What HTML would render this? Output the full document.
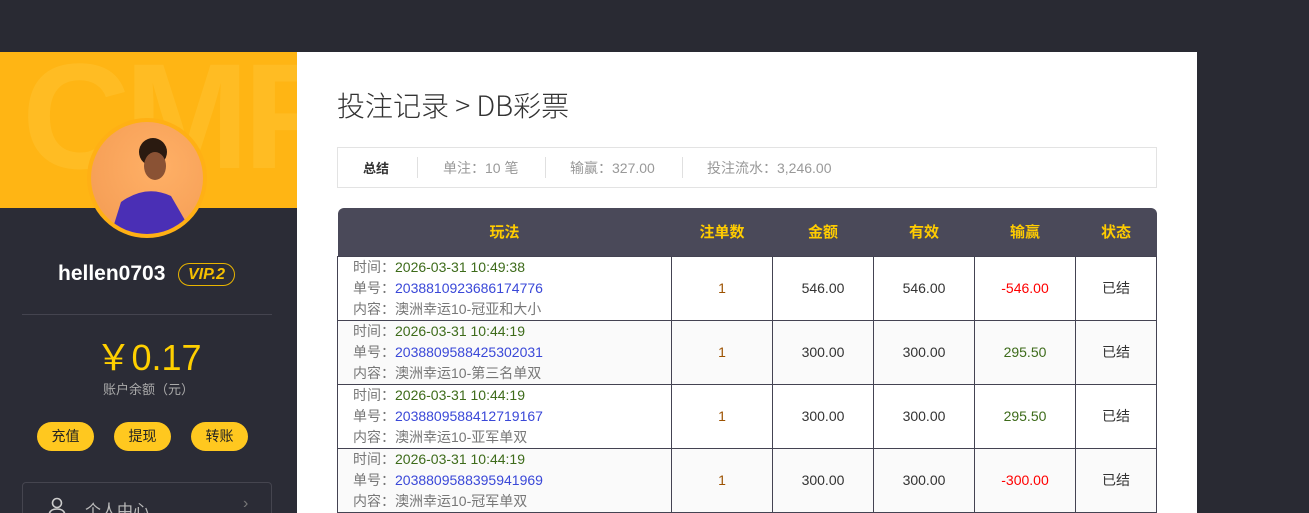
<!DOCTYPE html><html><head><meta charset="utf-8"><style>
*{margin:0;padding:0;box-sizing:border-box}
html,body{width:1309px;height:513px;overflow:hidden}
body{background:#292a33;font-family:"Liberation Sans","Noto Sans CJK SC",sans-serif;position:relative}
.side{position:absolute;left:0;top:52px;width:297px;height:461px;background:#2b2c36;overflow:hidden}
.hdr{position:absolute;left:0;top:0;width:297px;height:156px;background:#ffb514;overflow:hidden}
.hdr .cmf{position:absolute;left:22px;top:-22px;font-size:150px;font-weight:bold;color:rgba(255,210,80,.25);letter-spacing:-6px}
.av{position:absolute;left:87px;top:66px;width:120px;height:120px;border-radius:50%;background:#ffb014;padding:4px}
.av div{width:112px;height:112px;border-radius:50%;background:radial-gradient(circle at 60% 40%,#ffb066,#f39a52);overflow:hidden;position:relative}
.main{position:absolute;left:297px;top:52px;width:900px;height:461px;background:#fff;overflow:hidden}
h1{position:absolute;left:40px;top:33px;font-size:28px;color:#333;font-family:"Noto Sans CJK SC","Liberation Sans",sans-serif;font-weight:300;white-space:pre}
.sum{position:absolute;left:40px;top:95px;width:820px;height:41px;border:1px solid #e3e3e3;font-size:14px;color:#999}
.sum span{position:absolute;top:10px}
.sum i{position:absolute;top:9px;width:1px;height:21px;background:#e0e0e0}
table{position:absolute;left:40px;top:156px;width:820px;border-collapse:collapse;font-size:14px;color:#333}
th{background:#4a4959;color:#ffcc00;height:48px;font-size:15px;font-weight:bold}
td{border:1px solid #444352;height:64px;text-align:center}
td.l{text-align:left;padding-left:15px;line-height:21px;color:#777}
tr.a td{background:#fafafa}
.g{color:#3d6b1a}.b{color:#3a48d8}.r{color:#f00}.o{color:#9c5200}
.btn{position:absolute;top:370px;width:57px;height:29px;border-radius:15px;background:#ffc81f;font-size:14px;text-align:center;line-height:29px;color:#222}
</style></head><body>
<div class="side">
<div class="hdr"><div class="cmf">CMF</div></div>
<div class="av"><div><svg width="112" height="112"><circle cx="62" cy="30" r="14" fill="#2a1a10"/><ellipse cx="64" cy="44" rx="11" ry="14" fill="#8a5234"/><path d="M20 112 L30 80 Q55 62 80 74 L95 100 L90 112Z" fill="#4a2fb5"/></svg></div></div>
<div style="position:absolute;left:58px;top:210px;font-size:21px;font-weight:bold;color:#fff">hellen0703</div>
<div style="position:absolute;left:178px;top:211px;width:57px;height:23px;border:1px solid #e8b400;border-radius:12px;color:#f5c000;font-style:italic;font-weight:bold;font-size:16px;text-align:center;line-height:21px">VIP.2</div>
<div style="position:absolute;left:22px;top:262px;width:250px;height:1px;background:#44444f"></div>
<div style="position:absolute;left:0;width:297px;top:277px;text-align:center;font-size:36px;color:#ffd000">￥0.17</div>
<div style="position:absolute;left:0;width:297px;top:327px;text-align:center;font-size:13px;color:#aaa">账户余额（元）</div>
<div class="btn" style="left:37px">充值</div><div class="btn" style="left:114px">提现</div><div class="btn" style="left:191px">转账</div>
<div style="position:absolute;left:22px;top:430px;width:250px;height:60px;border:1px solid #45454f;border-radius:4px"><svg style="position:absolute;left:24px;top:14px" width="20" height="20"><circle cx="10" cy="6" r="4.5" fill="none" stroke="#ccc" stroke-width="1.6"/><path d="M2 19 Q2 12 10 12 Q18 12 18 19Z" fill="none" stroke="#ccc" stroke-width="1.6"/></svg><span style="position:absolute;left:62px;top:14px;font-size:16px;color:#bbb">个人中心</span><span style="position:absolute;left:220px;top:12px;color:#777;font-size:16px">›</span></div>
</div>
<div class="main">
<h1>投注记录 &gt; DB彩票</h1>
<div class="sum"><span style="left:25px;color:#333;font-weight:bold;font-size:13px">总结</span><i style="left:79px"></i><span style="left:105px">单注：10 笔</span><i style="left:207px"></i><span style="left:232px">输赢：327.00</span><i style="left:344px"></i><span style="left:369px">投注流水：3,246.00</span></div>
<table>
<tr><th style="width:334px;border-top-left-radius:6px">玩法</th><th style="width:101px">注单数</th><th style="width:101px">金额</th><th style="width:101px">有效</th><th style="width:101px">输赢</th><th style="border-top-right-radius:6px">状态</th></tr>
<tr><td class="l">时间：<span class="g">2026-03-31 10:49:38</span><br>单号：<span class="b">2038810923686174776</span><br>内容：澳洲幸运10-冠亚和大小</td><td class="o">1</td><td>546.00</td><td>546.00</td><td class="r">-546.00</td><td>已结</td></tr>
<tr class="a"><td class="l">时间：<span class="g">2026-03-31 10:44:19</span><br>单号：<span class="b">2038809588425302031</span><br>内容：澳洲幸运10-第三名单双</td><td class="o">1</td><td>300.00</td><td>300.00</td><td class="g">295.50</td><td>已结</td></tr>
<tr><td class="l">时间：<span class="g">2026-03-31 10:44:19</span><br>单号：<span class="b">2038809588412719167</span><br>内容：澳洲幸运10-亚军单双</td><td class="o">1</td><td>300.00</td><td>300.00</td><td class="g">295.50</td><td>已结</td></tr>
<tr class="a"><td class="l">时间：<span class="g">2026-03-31 10:44:19</span><br>单号：<span class="b">2038809588395941969</span><br>内容：澳洲幸运10-冠军单双</td><td class="o">1</td><td>300.00</td><td>300.00</td><td class="r">-300.00</td><td>已结</td></tr>
</table>
</div>
</body></html>
